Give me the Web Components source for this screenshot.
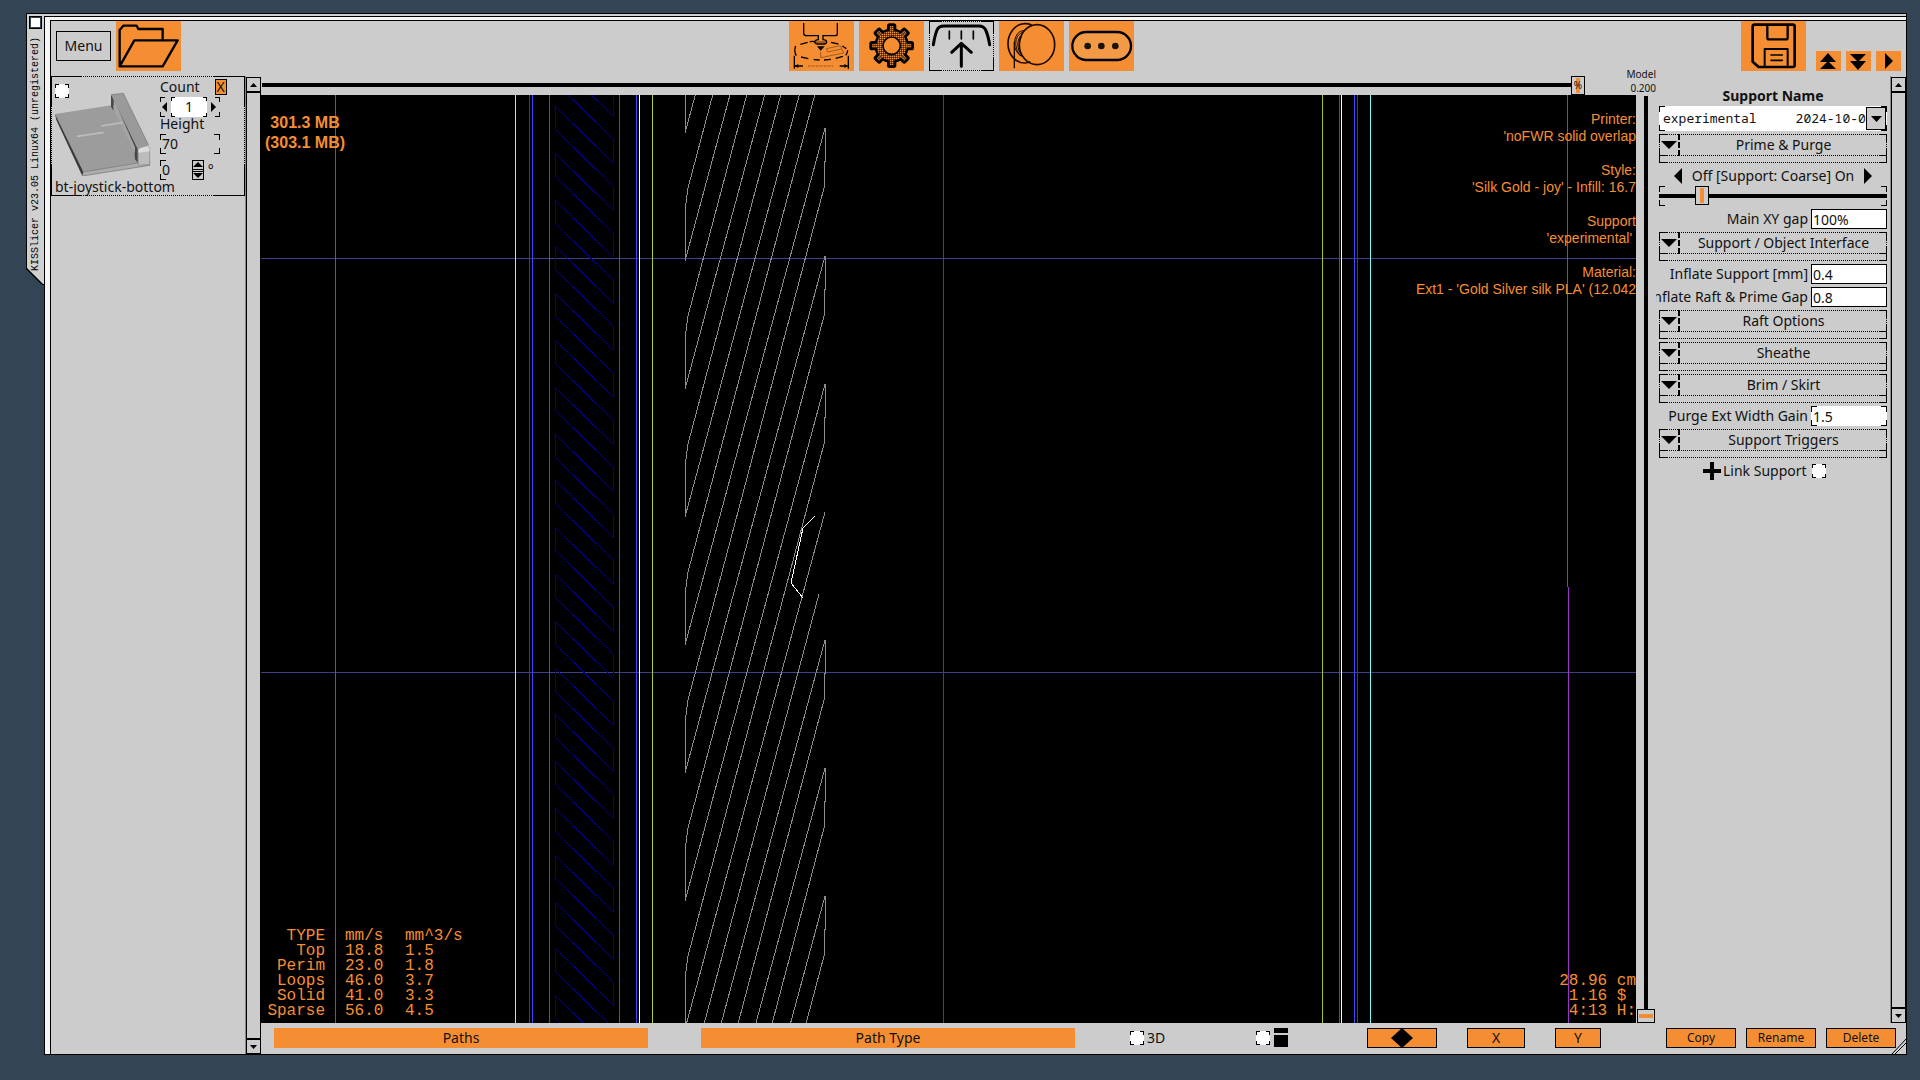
<!DOCTYPE html>
<html lang="en">
<head>
<meta charset="utf-8">
<title>KISSlicer v23.05 Linux64 (unregistered)</title>
<style>
  :root {
    --face: #cccccc;
    --accent: #f58e33;
    --desk: #334454;
    --ink: #000;
  }
  body {
    margin: 0;
    background: var(--desk);
    font: 14px/20px "Noto Sans", "Open Sans", sans-serif;
    color: #111;
  }
</style>
</head>
<body>
<ks-app></ks-app>

<script>
// Focus-style frame: solid corners, optional dotted edges between them.
const SOLID = "linear-gradient(#000,#000)";
const corners = (len = 5, lenY = len, dotted = false) => {
  const pos = ["0 0", "100% 0", "0 100%", "100% 100%"];
  const img = [], at = [], size = [], rep = [];
  pos.forEach(p => {
    img.push(SOLID, SOLID);
    at.push(p, p);
    size.push(`${len}px 1px`, `1px ${lenY}px`);
    rep.push("no-repeat", "no-repeat");
  });
  if (dotted) {
    const h = "repeating-linear-gradient(90deg,#000 0 1px,transparent 1px 2px)";
    const v = "repeating-linear-gradient(#000 0 1px,transparent 1px 2px)";
    img.push(h, h, v, v);
    at.push("0 0", "0 100%", "0 0", "100% 0");
    size.push("100% 1px", "100% 1px", "1px 100%", "1px 100%");
    rep.push("no-repeat", "no-repeat", "no-repeat", "no-repeat");
  }
  return `background-image:${img.join()};background-position:${at.join()};background-size:${size.join()};background-repeat:${rep.join()};`;
};

const BASE = `
  *, *::before, *::after { box-sizing: border-box; }
  button, input, select { font: inherit; color: inherit; margin: 0; padding: 0; border: 0; border-radius: 0; outline: 0; background: none; }
  svg { display: block; }
  input[type=checkbox] { appearance: none; width: 14px; height: 14px; flex: none; background-color: #fff; ${corners(4)} }
`;

const ICONS = {
  folder: `<path d="M11 136V27L22 14H62L67 24H140V57M11 136L55 58H185L140 136Z" fill="none" stroke="#000" stroke-width="7" stroke-linejoin="round"/>`,
  printer: `
    <g fill="none" stroke="#000" stroke-width="4">
      <path d="M44 6V38Q45 44 52 44H88V56Q77 57 77 64Q80 69 86 69H105Q113 68 113 62Q112 57 102 56V44H138Q145 44 145 38V6"/>
      <path d="M80 63H110" stroke-width="2"/>
      <path d="M20 75Q14 90 22 104M34 70L56 64M62 62L76 61M126 64L148 69M160 75L172 83M176 88Q176 96 170 103M162 106L140 112M126 115L105 117M92 117L74 116M58 113L36 108"/>
      <path d="M16 104V143M178 104V143"/>
      <path d="M18 135H42M152 135H176"/>
      <path d="M57 135H132" stroke-width="5" stroke-dasharray="2 2" opacity=".4"/>
    </g>
    <path d="M84 76H107L95 89ZM17 135L28 129V141ZM177 135L166 129V141Z"/>
    <path d="M95 92V110L164 96L154 74L112 83L116 93L158 84" fill="none" stroke="#7a4310" stroke-width="2"/>`,
  gear: `
    <defs><pattern id="mesh" width="6" height="6" patternUnits="userSpaceOnUse"><rect width="6" height="6" fill="#f58e33"/><path d="M0 0H6M0 0V6" stroke="#000" stroke-width="3"/></pattern></defs>
    ${[0, 45, 90, 135].map(a => `<rect x="84" y="7" width="28" height="134" rx="8" transform="rotate(${a} 98 74)"/>`).join("")}
    <circle cx="98" cy="74" r="52"/>
    ${[0, 45, 90, 135].map(a => `<rect x="92" y="15" width="12" height="118" rx="3" fill="url(#mesh)" transform="rotate(${a} 98 74)"/>`).join("")}
    <circle cx="98" cy="74" r="45" fill="url(#mesh)"/>
    <circle cx="98" cy="74" r="26" fill="#f58e33" stroke="#000" stroke-width="5"/>`,
  support: `
    <g fill="none" stroke="#000" stroke-linecap="round" stroke-linejoin="round">
      <path d="M13 71Q18 42 24 27Q29 15 45 15H150Q164 15 170 27Q177 42 182 71" stroke-width="9"/>
      <path d="M61 30V54M97 30V54M133 30V54" stroke-width="5"/>
      <path d="M97 136V68M68 94L97 67L127 94" stroke-width="9"/>
    </g>`,
  spool: `
    <g fill="none" stroke="#1c0a00" stroke-width="5">
      <path d="M98 12Q88 8 78 8C49 8 27 36 27 68S49 126 78 126Q88 126 94 122"/>
      <ellipse cx="114" cy="71" rx="53" ry="60"/>
      <path d="M46 142V62" stroke-width="4"/>
      <path d="M76 28Q48 30 46 68M74 32Q50 40 50 70Q52 92 64 104M72 38Q56 50 56 72Q58 92 68 104M68 46Q60 58 61 76M46 68Q48 96 68 106" stroke-width="3"/>
    </g>`,
  more: `
    <rect x="10" y="33" width="176" height="84" rx="42" fill="#f39a47" stroke="#000" stroke-width="7"/>
    <g fill="#1a1208"><circle cx="56" cy="75" r="10"/><circle cx="97" cy="75" r="10"/><circle cx="139" cy="75" r="10"/></g>`,
  save: `
    <g fill="none" stroke="#000" stroke-width="8" stroke-linejoin="round">
      <path d="M40 11H155Q161 11 161 17V132Q161 138 155 138H53L35 122V17Q35 11 41 11Z"/>
      <path d="M79 12V50Q79 55 84 55H135Q140 55 140 50V12" stroke-width="7"/>
      <path d="M71 138V84H140V138" stroke-width="6"/>
      <path d="M90 102H124M90 118H124" stroke-width="5" stroke-linecap="round"/>
    </g>`,
};

class KsTool extends HTMLElement {
  constructor() {
    super();
    this.attachShadow({ mode: "open" });
    this.shadowRoot.innerHTML = `
      <style>${BASE}
        :host { display: block; width: 65px; height: 50px; }
        button { display: block; width: 100%; height: 100%; background-color: var(--accent); }
        svg { width: 100%; height: 100%; }
        :host([active]) button { background-color: var(--face); ${corners(13, 13, true)} }
      </style>
      <button aria-label="${this.getAttribute("label")}"><svg viewBox="0 0 195 150">${ICONS[this.getAttribute("icon")]}</svg></button>`;
  }
}
customElements.define("ks-tool", KsTool);

// Flat push button; "framed" gives the outlined variant.
class KsButton extends HTMLElement {
  constructor() {
    super();
    this.attachShadow({ mode: "open" });
    this.shadowRoot.innerHTML = `
      <style>${BASE}
        :host { display: block; height: 20px; }
        button { display: flex; align-items: center; justify-content: center; width: 100%; height: 100%; background: var(--accent); }
        :host([framed]) button { border: 1px solid #000; }
        :host([plain]) button { background: var(--face); }
      </style>
      <button><slot></slot></button>`;
  }
}
customElements.define("ks-button", KsButton);

class KsScrollbar extends HTMLElement {
  constructor() {
    super();
    this.attachShadow({ mode: "open" });
    this.shadowRoot.innerHTML = `
      <style>${BASE}
        :host { display: flex; flex-direction: column; flex: none; width: 16px; border-left: 1px solid #888; padding-top: 1px; }
        button { height: 15px; border: 1px solid #000; display: grid; place-items: center; }
        .trough { flex: 1; border: 1px solid #000; }
      </style>
      <button aria-label="Up"><svg width="7" height="4"><path d="M0 4L3.500 0L7 4Z"/></svg></button>
      <div class="trough"></div>
      <button aria-label="Down"><svg width="7" height="4"><path d="M0 0H7L3.500 4Z"/></svg></button>`;
  }
}
customElements.define("ks-scrollbar", KsScrollbar);

class KsObjectCard extends HTMLElement {
  constructor() {
    super();
    this.attachShadow({ mode: "open" });
    this.shadowRoot.innerHTML = `
      <style>${BASE}
        :host { display: block; height: 120px; padding: 1px 4px; ${corners(31, 31, true)} }
        .body { display: flex; height: 103px; }
        .thumb { width: 105px; padding-top: 7px; }
        .thumb input { display: block; }
        .thumb svg { margin-top: -6px; }
        .props { flex: 1; }
        .line { display: flex; align-items: center; height: 20px; }
        .line.h { height: 17px; line-height: 14px; align-items: flex-start; }
        .line.last { margin-top: 6px; }
        .close { width: 12px; height: 16px; margin-left: 15px; background: var(--accent); border: 1px solid #000; line-height: 14px; text-align: center; }
        .spin { width: 60px; justify-content: space-between; padding: 0 4px 0 2px; ${corners(5)} }
        .spin input { width: 36px; height: 20px; text-align: center; background-color: #fff; ${corners(4)} }
        .val { display: block; width: 60px; height: 20px; padding-left: 2px; ${corners(6)} }
        .deg { display: flex; width: 44px; height: 20px; ${corners(6)} }
        .deg input { width: 32px; padding-left: 2px; }
        .deg div { width: 12px; border: 1px solid #000; display: grid; align-content: space-evenly; justify-items: center; }
        .deg div button { display: block; }
        .name { line-height: 14px; white-space: nowrap; }
      </style>
      <div class="body">
        <div class="thumb">
          <input type="checkbox" aria-label="Select object">
          <svg width="96" height="84" viewBox="0 0 288 252">
            <path d="M0 66L170 40L250 168V212L84 240Z" fill="#9c9c9c"/>
            <path d="M0 66L4 84L82 252L85 240Z" fill="#383838"/>
            <path d="M85 240L284 207V220L82 252Z" fill="#adadad" stroke="#6e6e6e" stroke-width="2"/>
            <path d="M168 8L176 16L248 170V212L240 202L238 170L176 38V56L168 44Z" fill="#474747"/>
            <path d="M176 20V54L240 184V166Z" fill="#a4a4a4"/>
            <path d="M168 8L205 4L281 160L248 170Z" fill="#9a9a9a"/>
            <path d="M168 8L205 4L281 160" fill="none" stroke="#777" stroke-width="2"/>
            <path d="M250 212V176Q250 168 258 167L276 163Q284 164 284 174V217L250 220Z" fill="#bcbcbc" stroke="#888" stroke-width="2"/>
            <path d="M250 182V176Q252 167 260 167L276 163Q284 165 284 178Z" fill="#dcdcdc"/>
            <path d="M66 133L146 121M138 102L202 92" stroke="#bdbdbd" stroke-width="5"/>
          </svg>
        </div>
        <div class="props">
          <div class="line"><label for="count">Count</label><button class="close" aria-label="Remove">X</button></div>
          <div class="line spin">
            <svg width="5" height="10"><path d="M5 0V10L0 5Z"/></svg>
            <input id="count" value="1">
            <svg width="5" height="10"><path d="M0 0V10L5 5Z"/></svg>
          </div>
          <div class="line h"><label for="height">Height</label></div>
          <input class="val" id="height" value="70">
          <div class="line last">
            <span class="deg"><input aria-label="Rotation" value="0"><div>
              <button aria-label="More"><svg width="10" height="5"><path d="M0 5L5 0L10 5Z"/></svg></button>
              <svg width="10" height="3"><path d="M0 0H10V1H0ZM0 2H10V3H0Z"/></svg>
              <button aria-label="Less"><svg width="10" height="5"><path d="M0 0H10L5 5Z"/></svg></button>
            </div></span>
            <span>&nbsp;°</span>
          </div>
        </div>
      </div>
      <div class="name">bt-joystick-bottom</div>`;
  }
}
customElements.define("ks-object-card", KsObjectCard);

const SPEEDS = [
  ["Top", "18.8", "1.5"],
  ["Perim", "23.0", "1.8"],
  ["Loops", "46.0", "3.7"],
  ["Solid", "41.0", "3.3"],
  ["Sparse", "56.0", "4.5"],
];

// Slice outlines seen from above: [x, colour]
const WALLS = [
  [74, "#8f35b8"], [254, "#7ff"], [268, "#40406f"], [271, "#4242ff"], [288, "#4242ff"],
  [358, "#4242ff"], [375, "#4242ff"], [378, "#fff"], [391, "#b0c832"], [1061, "#b0c020"],
  [1078, "#4848e0"], [1080, "#fff"], [1093, "#4242ff"], [1096, "#40406f"], [1109, "#7ff"],
];

class KsViewport extends HTMLElement {
  constructor() {
    super();
    this.attachShadow({ mode: "open" });
    this.shadowRoot.innerHTML = `
      <style>${BASE}
        :host { display: block; position: relative; overflow: hidden; background: #000; color: var(--accent); }
        svg.scene { position: absolute; inset: 0; width: 100%; height: 100%; }
        .mem, .info, .speeds, .cost { position: absolute; margin: 0; white-space: pre; }
        .mem { left: 4px; top: 18px; text-align: center; font: bold 16px/20px "Liberation Sans Narrow", "Liberation Sans", sans-serif; }
        .info { right: 0; top: 16px; text-align: right; font: 14px/17px "Liberation Sans Narrow", "Liberation Sans", sans-serif; }
        .speeds, .cost { font: 16px/15px "Liberation Mono", monospace; }
        .speeds { left: 4px; bottom: 4px; border-collapse: collapse; }
        .speeds th, .speeds td { padding: 0 0 0 20px; font-weight: normal; text-align: left; height: 15px; }
        .speeds :first-child { text-align: right; }
        .speeds th:first-child, .speeds td:first-child { width: 60px; padding: 0; }
        .speeds th:nth-child(2) { width: 60px; }
        .cost { right: 0; bottom: 4px; }
      </style>
      <svg class="scene" shape-rendering="crispEdges">${this._scene()}</svg>
      <div class="mem">301.3 MB\n(303.1 MB)</div>
      <div class="info">Printer:\n'noFWR solid overlap\n\nStyle:\n'Silk Gold - joy' - Infill: 16.7\n\nSupport\n'experimental' \n\nMaterial:\nExt1 - 'Gold Silver silk PLA' (12.042</div>
      <table class="speeds">
        <thead><tr><th>TYPE</th><th>mm/s</th><th>mm^3/s</th></tr></thead>
        <tbody>${SPEEDS.map(r => `<tr>${r.map(c => `<td>${c}</td>`).join("")}</tr>`).join("")}</tbody>
      </table>
      <div class="cost">28.96 cm\n 1.16 $\n 4:13 H:</div>`;
  }

  _scene() {
    let out = "";
    // bed grid
    out += `<g fill="#40408a"><rect y="163" width="100%" height="1"/><rect y="577" width="100%" height="1"/><rect x="682" width="1" height="100%"/></g>`;

    // solid infill
    let solid = "";
    for (let k = -2; k < 20; k++) {
      const y = Math.round(11 + k * 46.8);
      solid += `M294 ${y + 23}V${y}L352 ${y + 57}M294 ${y + 23}L352 ${y + 80}V${y + 104}`;
    }
    out += `<path d="${solid}" fill="none" stroke="#00008c"/>`;

    // sparse infill: a full stroke down to the foot, then back up to the turn above
    let sparse = "";
    for (let k = -4; k < 12; k++) {
      const top = Math.round(33 + k * 128);
      const foot = top + 517;
      sparse += `M564 ${top}L424 ${foot}V${foot - 44}L425 ${foot - 58}L427 ${foot - 73}`;
      // the stroke beside the small gap feature stops short
      sparse += k === 4 ? `L558 ${top - 46}` : `L563 ${top - 68}V${top - 95}H564V${top - 128}`;
    }
    out += `<path d="${sparse}" fill="none" stroke="#8c8c8c"/>`;
    out += `<path d="M554 421L542 433L530 488L542 503" fill="none" stroke="#fff"/>`;

    WALLS.forEach(([x, c]) => { out += `<rect x="${x}" width="1" height="100%" fill="${c}"/>`; });
    out += `<rect x="1306" width="1" height="492" fill="#8f35b8"/><rect x="1307" y="492" width="1" height="100%" fill="#9a35c8"/>`;
    return out;
  }
}
customElements.define("ks-viewport", KsViewport);

// Collapsible group header
class KsSection extends HTMLElement {
  constructor() {
    super();
    this.attachShadow({ mode: "open" });
    this.shadowRoot.innerHTML = `
      <style>${BASE}
        :host { display: block; height: 29px; ${corners(8, 8, true)} }
        button { display: flex; width: 100%; height: 22px; ${corners(8, 8, true)} }
        .arrow { width: 21px; height: 22px; padding: 7px 0 0 2px; border-right: 2px dashed #000; }
        .text { flex: 1; text-align: center; line-height: 21px; }
      </style>
      <button><span class="arrow"><svg width="16" height="8"><path d="M0 0H16L8 8Z"/></svg></span><span class="text"><slot></slot></span></button>`;
  }
}
customElements.define("ks-section", KsSection);

class KsField extends HTMLElement {
  constructor() {
    super();
    this.attachShadow({ mode: "open" });
    this.shadowRoot.innerHTML = `
      <style>${BASE}
        :host { display: flex; justify-content: flex-end; gap: 3px; height: 20px; white-space: nowrap; }
        label { flex: none; }
        input { flex: none; width: 76px; height: 20px; padding: 1px 0 0 1px; background-color: #fff; border: 1px solid #000; }
        :host([focused]) input { border: 0; padding: 1px 0 0 2px; ${corners(6)} }
      </style>
      <label for="f"><slot></slot></label><input id="f" value="${this.getAttribute("value")}">`;
  }
}
customElements.define("ks-field", KsField);

class KsSupportPanel extends HTMLElement {
  constructor() {
    super();
    this.attachShadow({ mode: "open" });
    this.shadowRoot.innerHTML = `
      <style>${BASE}
        :host { display: flex; flex-direction: column; gap: 3px; flex: none; width: 234px; padding: 12px 3px 0; overflow: hidden; }
        .title { font-weight: bold; line-height: 15px; text-align: center; }
        .combo { position: relative; height: 25px; background-color: #fff; ${corners(6)} }
        select { appearance: none; display: block; width: 100%; height: 24px; padding: 0 20px 0 4px; font: 13px/23px "Noto Sans Mono", "DejaVu Sans Mono", monospace; }
        .drop { position: absolute; right: 1px; top: 1px; width: 20px; height: 23px; background: var(--face); border: 1px solid #000; display: grid; place-items: center; pointer-events: none; }
        .density { display: flex; align-items: center; justify-content: center; gap: 10px; height: 20px; white-space: nowrap; }
        input[type=range] { appearance: none; display: block; width: 100%; height: 20px; ${corners(6)} }
        input[type=range]::-webkit-slider-runnable-track { height: 20px; background: linear-gradient(#000,#000) 0 8px / 100% 4px no-repeat; }
        input[type=range]::-webkit-slider-thumb { appearance: none; width: 14px; height: 19px; border: 1px solid #000; background: linear-gradient(var(--accent),var(--accent)) center / 4px 15px no-repeat var(--face); }
        .link { display: flex; align-items: center; height: 20px; padding-left: 44px; gap: 2px; }
        .link input { margin-left: 3px; }
      </style>
      <div class="title">Support Name</div>
      <div class="combo">
        <select aria-label="Support Name"><option>experimental&nbsp;&nbsp;&nbsp;&nbsp;&nbsp;2024-10-0</option></select>
        <span class="drop"><svg width="11" height="6"><path d="M0 0H11L5.500 6Z"/></svg></span>
      </div>
      <ks-section>Prime &amp; Purge</ks-section>
      <div>
        <div class="density">
          <svg width="8" height="16"><path d="M8 0V16L0 8Z"/></svg>
          <label for="density">Off [Support: Coarse] On</label>
          <svg width="8" height="16"><path d="M0 0V16L8 8Z"/></svg>
        </div>
        <input id="density" type="range" min="0" max="100" value="17">
      </div>
      <ks-field value="100%">Main XY gap</ks-field>
      <ks-section>Support / Object Interface</ks-section>
      <ks-field value="0.4">Inflate Support [mm]</ks-field>
      <ks-field value="0.8">Inflate Raft &amp; Prime Gap</ks-field>
      <ks-section>Raft Options</ks-section>
      <ks-section>Sheathe</ks-section>
      <ks-section>Brim / Skirt</ks-section>
      <ks-field value="1.5" focused>Purge Ext Width Gain</ks-field>
      <ks-section>Support Triggers</ks-section>
      <div class="link">
        <svg width="18" height="18"><path d="M7 0H11V7H18V11H11V18H7V11H0V7H7Z"/></svg>
        <label for="link">Link Support</label><input id="link" type="checkbox">
      </div>`;
  }
}
customElements.define("ks-support-panel", KsSupportPanel);

class KsToolbar extends HTMLElement {
  constructor() {
    super();
    this.attachShadow({ mode: "open" });
    this.shadowRoot.innerHTML = `
      <style>${BASE}
        :host { display: flex; justify-content: space-between; align-items: flex-start; height: 55px; padding: 0 5px; }
        .group { display: flex; gap: 5px; align-items: flex-start; }
        .menu { width: 55px; height: 30px; margin-top: 10px; }
        .small { width: 25px; align-self: flex-end; }
        ks-tool + .small { margin-left: 5px; }
      </style>
      <div class="group">
        <ks-button class="menu" framed plain>Menu</ks-button>
        <ks-tool icon="folder" label="Open"></ks-tool>
      </div>
      <div class="group">
        <ks-tool icon="printer" label="Printer"></ks-tool>
        <ks-tool icon="gear" label="Style"></ks-tool>
        <ks-tool icon="support" label="Support" active></ks-tool>
        <ks-tool icon="spool" label="Material"></ks-tool>
        <ks-tool icon="more" label="More"></ks-tool>
      </div>
      <div class="group">
        <ks-tool icon="save" label="Save"></ks-tool>
        <ks-button class="small"><svg width="17" height="17"><path d="M8 0L16 9H0ZM8 8L16 16H0Z"/></svg></ks-button>
        <ks-button class="small"><svg width="17" height="17"><path d="M0 1H16L8 9ZM0 8H16L8 17Z"/></svg></ks-button>
        <ks-button class="small"><svg width="8" height="16"><path d="M0 0L8 8L0 16Z"/></svg></ks-button>
      </div>`;
  }
}
customElements.define("ks-toolbar", KsToolbar);

class KsBottomBar extends HTMLElement {
  constructor() {
    super();
    this.attachShadow({ mode: "open" });
    this.shadowRoot.innerHTML = `
      <style>${BASE}
        :host { display: flex; align-items: flex-start; position: relative; height: 31px; padding: 5px 10px 0 13px; }
        .wide { flex: 1; }
        .wide + .wide { margin: 0 55px 0 53px; }
        .check { display: flex; align-items: center; gap: 3px; height: 20px; width: 126px; }
        .check.pic { width: 111px; gap: 4px; }
        .views, .edit { display: flex; gap: 30px; }
        .edit { gap: 10px; margin-left: 65px; font-size: 12px; }
        .b70 { width: 70px; }
        .b58 { width: 58px; }
        .b46 { width: 46px; }
        .grip { position: absolute; right: 0; bottom: 0; }
      </style>
      <ks-button class="wide">Paths</ks-button>
      <ks-button class="wide">Path Type</ks-button>
      <div class="check"><input id="d3" type="checkbox"><label for="d3">3D</label></div>
      <div class="check pic"><input type="checkbox" aria-label="Layer stack">
        <svg width="14" height="20"><path d="M0 0H14V5H0ZM0 7H14V19H0Z"/></svg></div>
      <div class="views">
        <ks-button class="b70" framed><svg width="22" height="20"><path d="M11 0L22 10L11 20L0 10Z"/></svg></ks-button>
        <ks-button class="b58" framed>X</ks-button>
        <ks-button class="b46" framed>Y</ks-button>
      </div>
      <div class="edit">
        <ks-button class="b70" framed>Copy</ks-button>
        <ks-button class="b70" framed>Rename</ks-button>
        <ks-button class="b70" framed>Delete</ks-button>
      </div>
      <svg class="grip" width="14" height="15"><path d="M0 15L14 0M3 15L14 4" stroke="#000" fill="none"/></svg>`;
  }
}
customElements.define("ks-bottom-bar", KsBottomBar);

// Decorated desktop window with a side title tab
class KsWindow extends HTMLElement {
  constructor() {
    super();
    this.attachShadow({ mode: "open" });
    this.shadowRoot.innerHTML = `
      <style>${BASE}
        :host { display: flex; align-items: flex-start; margin: 13px 13px 25px 26px; min-height: calc(100vh - 38px); }
        .tab, .tab .in { clip-path: polygon(0 0, 100% 0, 100% 100%, 16px 100%, 0 calc(100% - 16px)); }
        .tab { flex: none; width: 18px; height: 272px; padding: 1px 0 1px 1px; background: #000; }
        .in { height: 100%; padding: 2px; background: #d0d0d0; display: flex; flex-direction: column; gap: 8px; }
        .in button { flex: none; width: 13px; height: 13px; border: 2px solid #000; background: #fff; outline: 1px solid var(--desk); outline-offset: -2px; }
        .in span { writing-mode: vertical-rl; transform: rotate(180deg); width: 13px; font: 10px/13px "Liberation Mono", monospace; color: #000; white-space: nowrap; }
        .frame { flex: 1; align-self: stretch; display: flex; flex-direction: column; min-width: 0; border: solid #000; border-width: 1px 1px 1px 0; background: #d0d0d0; padding-top: 2px; }
        .rim { flex: 1; display: flex; border: solid #000; border-width: 1px 0 0 1px; background: #f6f6f6; padding: 3px 0 0 5px; }
        .client { flex: 1; min-width: 0; display: flex; flex-direction: column; border: solid #000; border-width: 1px 0 0 1px; background: var(--face); }
      </style>
      <div class="tab"><div class="in"><button aria-label="Close"></button><span>${this.getAttribute("caption")}</span></div></div>
      <div class="frame"><div class="rim"><div class="client"><slot></slot></div></div></div>`;
  }
}
customElements.define("ks-window", KsWindow);

class KsApp extends HTMLElement {
  constructor() {
    super();
    this.attachShadow({ mode: "open" });
    this.shadowRoot.innerHTML = `
      <style>${BASE}
        :host { display: block; }
        .body, .right, .work, .center, .stage { display: flex; }
        .body, .work, .stage { flex: 1; }
        .right, .center { flex: 1; flex-direction: column; min-width: 0; }
        .list { flex: none; width: 194px; }
        .top { display: flex; align-items: flex-end; height: 19px; padding-left: 1px; }
        .layer { position: relative; flex: 1; height: 19px; }
        .layer span { position: absolute; right: 0; top: 0; width: 14px; font-size: 10px; line-height: 19px; text-align: center; pointer-events: none; }
        .model { width: 71px; font-size: 10px; line-height: 14px; text-align: right; }
        input[type=range] { appearance: none; display: block; }
        .h { width: 100%; height: 19px; }
        .h::-webkit-slider-runnable-track { height: 19px; background: linear-gradient(#000,#000) 0 7px / 100% 4px no-repeat; }
        .h::-webkit-slider-thumb { appearance: none; width: 14px; height: 19px; border: 1px solid #000; background: linear-gradient(var(--accent),var(--accent)) center / 4px 15px no-repeat var(--face); }
        ks-viewport { flex: 1; min-width: 0; }
        .v { writing-mode: vertical-lr; flex: none; width: 18px; margin: 1px 1px 0; }
        .v::-webkit-slider-runnable-track { width: 18px; background: linear-gradient(#000,#000) 7px 0 / 4px 100% no-repeat; }
        .v::-webkit-slider-thumb { appearance: none; width: 18px; height: 14px; border: 1px solid #000; background: linear-gradient(var(--accent),var(--accent)) center / 14px 4px no-repeat var(--face); }
      </style>
      <ks-window caption="KISSlicer v23.05 Linux64 (unregistered)">
        <ks-toolbar></ks-toolbar>
        <div class="body">
          <div class="list"><ks-object-card></ks-object-card></div>
          <ks-scrollbar></ks-scrollbar>
          <div class="right">
            <div class="work">
              <div class="center">
                <div class="top">
                  <div class="layer"><input class="h" type="range" aria-label="Path progress" max="100" value="100"><span>%</span></div>
                  <div class="model">Model<br>0.200</div>
                </div>
                <div class="stage">
                  <ks-viewport></ks-viewport>
                  <input class="v" type="range" aria-label="Layer height" max="100" value="100">
                </div>
              </div>
              <ks-support-panel></ks-support-panel>
              <ks-scrollbar></ks-scrollbar>
            </div>
            <ks-bottom-bar></ks-bottom-bar>
          </div>
        </div>
      </ks-window>`;
  }
}
customElements.define("ks-app", KsApp);
</script>
</body>
</html>
